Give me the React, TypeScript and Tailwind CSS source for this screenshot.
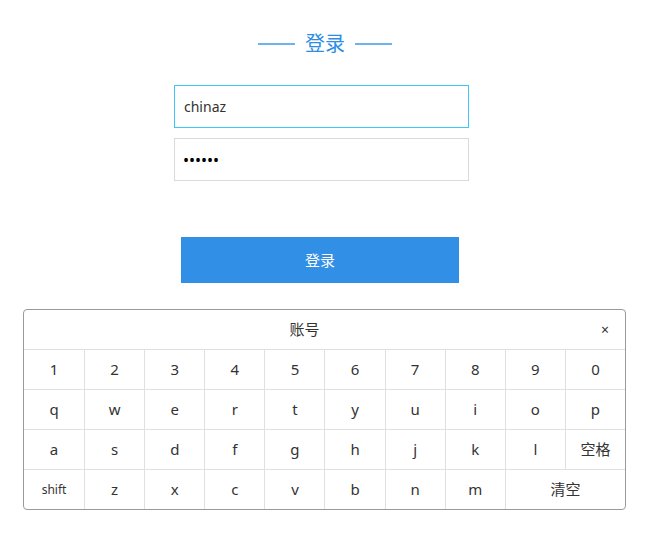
import React from 'react';

const font = { fontFamily: '"Noto Sans", "Noto Sans CJK SC", sans-serif' };

const rows: string[][] = [
  ['1', '2', '3', '4', '5', '6', '7', '8', '9', '0'],
  ['q', 'w', 'e', 'r', 't', 'y', 'u', 'i', 'o', 'p'],
  ['a', 's', 'd', 'f', 'g', 'h', 'j', 'k', 'l', '空格'],
];

const lastRow = ['shift', 'z', 'x', 'c', 'v', 'b', 'n', 'm'];

const App: React.FC = () => {
  return (
    <div className="w-[650px] h-[536px] bg-white text-[#333] pt-[31px]" style={font}>
      {/* title */}
      <div className="flex items-center justify-center gap-[10px] h-[26px]">
        <span className="block w-[37px] h-[2px] bg-[#6fb2ee]"></span>
        <span className="text-[20px] leading-[26px] text-[#2e8de4]">登录</span>
        <span className="block w-[37px] h-[2px] bg-[#6fb2ee]"></span>
      </div>

      {/* inputs */}
      <div className="ml-[174px] w-[295px] mt-[28px] flex flex-col gap-[10px]">
        <div className="h-[43px] border border-[#3ec6f7] flex items-center px-[9px] text-[14px]">chinaz</div>
        <div className="h-[43px] border border-[#d9d9d9] flex items-center px-[8px] text-[16px] text-black tracking-[0px]">
          ••••••
        </div>
      </div>

      {/* submit */}
      <button className="block ml-[181px] mt-[56px] w-[278px] h-[46px] bg-[#318fe6] text-white text-[15px]">
        登录
      </button>

      {/* keyboard */}
      <div className="ml-[23px] mt-[26px] w-[603px] border border-[#9a9a9a] rounded-[4px] overflow-hidden">
        <div className="flex h-[39px] items-center">
          <div className="flex-1 text-center text-[15px]">账号</div>
          <div className="w-[40px] text-center text-[14px] leading-none">×</div>
        </div>
        {rows.map((row, i) => (
          <div key={i} className="grid grid-cols-10 h-[40px] border-t border-[#e0e0e0]">
            {row.map((k, j) => (
              <div
                key={k}
                className={`flex items-center justify-center text-[15px] ${j > 0 ? 'border-l border-[#e0e0e0]' : ''}`}
              >
                {k}
              </div>
            ))}
          </div>
        ))}
        <div className="grid grid-cols-10 h-[40px] border-t border-[#e0e0e0]">
          {lastRow.map((k, j) => (
            <div
              key={k}
              className={`flex items-center justify-center ${k === 'shift' ? 'text-[12px]' : 'text-[15px]'} ${j > 0 ? 'border-l border-[#e0e0e0]' : ''}`}
            >
              {k}
            </div>
          ))}
          <div className="col-span-2 flex items-center justify-center text-[15px] border-l border-[#e0e0e0]">清空</div>
        </div>
      </div>
    </div>
  );
};

export default App;
